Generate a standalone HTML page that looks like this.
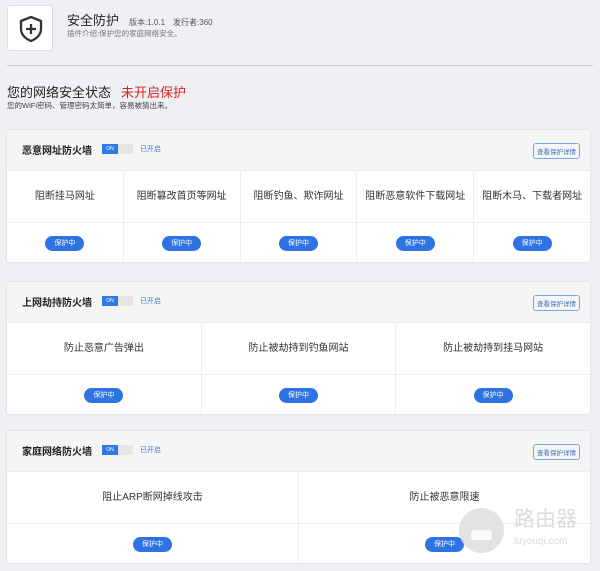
<!DOCTYPE html>
<html><head><meta charset="utf-8"><style>
*{margin:0;padding:0;box-sizing:border-box}
body{width:600px;height:571px;background:#eef0f3;font-family:"Liberation Sans","Noto Sans CJK SC",sans-serif;color:#333;position:relative;overflow:hidden}
.logo{position:absolute;left:7px;top:5px;width:46px;height:46px;background:#fff;border:1px solid #ddd;border-radius:3px}
.t1{position:absolute;left:67px;top:10px;font-size:13px;color:#222}
.t1 small{font-size:8px;color:#555;margin-left:10px}
.t2{position:absolute;left:67px;top:28px;font-size:7.5px;color:#777}
.hr{position:absolute;left:7px;right:7px;top:65px;border-top:1px solid #ccc}
.s1{position:absolute;left:7px;top:82px;font-size:13px;color:#222}
.s1 b{font-weight:normal;color:#e02020;margin-left:10px}
.s2{position:absolute;left:7px;top:100px;font-size:7.5px;color:#444}
.card{position:absolute;left:7px;width:583px;background:#fff;border-radius:3px;box-shadow:0 0 2px rgba(0,0,0,.15)}
.hd{height:41px;background:#f5f5f6;position:relative;border-bottom:1px solid #eee}
.hd .n{position:absolute;left:15px;top:12px;font-size:10px;font-weight:bold;color:#222}
.sw{position:absolute;left:95px;top:14px;width:31px;height:10px;background:#e6e6e6}
.sw i{display:block;width:16px;height:10px;background:#2f7ae5;color:#fff;font-size:5px;font-style:normal;text-align:center;line-height:10px}
.on{position:absolute;left:133px;top:14px;font-size:7px;color:#3b7be0}
.det{position:absolute;right:10px;top:13px;border:1px solid #7aa6e8;border-radius:3px;font-size:6.5px;color:#3b6fc0;padding:2px 3px}
.row{display:flex}
.row>div{flex:1;border-right:1px solid #eee;text-align:center}
.row>div:last-child{border-right:none}
.tx{height:52px;line-height:52px;font-size:10px;border-bottom:1px solid #eee}
.bd{height:39px;padding-top:9px}
.bd span{display:inline-block;background:#2f73e3;color:#fff;font-size:7px;border-radius:8px;width:39px;height:15px;line-height:15px}
.wm{position:absolute;left:459px;top:508px;width:45px;height:45px;border-radius:50%;background:rgba(215,215,218,.7)}
.wm i{position:absolute;left:12px;top:22px;width:21px;height:10px;border-radius:3px;background:rgba(255,255,255,.8)}
.wt{position:absolute;left:514px;top:503px;font-size:21px;color:rgba(215,215,218,.9)}
.wu{position:absolute;left:514px;top:536px;font-size:10px;color:rgba(215,215,218,.9)}
</style></head><body>
<div class="logo"><svg width="46" height="46" viewBox="0 0 46 46"><path d="M23 11 L33 15 V23 C33 29 28 33 23 35 C18 33 13 29 13 23 V15 Z" fill="none" stroke="#333" stroke-width="2.3" stroke-linejoin="round"/><path d="M23 18v10M18 23h10" stroke="#333" stroke-width="2.3"/></svg></div>
<div class="t1">安全防护<small>版本:1.0.1</small><small style="margin-left:8px">发行者:360</small></div>
<div class="t2">插件介绍:保护您的家庭网络安全。</div>
<div class="hr"></div>
<div class="s1">您的网络安全状态<b>未开启保护</b></div>
<div class="s2">您的WiFi密码、管理密码太简单，容易被猜出来。</div>

<div class="card" style="top:130px">
<div class="hd"><span class="n">恶意网址防火墙</span><div class="sw"><i>ON</i></div><span class="on">已开启</span><span class="det">查看保护详情</span></div>
<div class="row"><div><div class="tx">阻断挂马网址</div><div class="bd"><span>保护中</span></div></div><div><div class="tx">阻断篡改首页等网址</div><div class="bd"><span>保护中</span></div></div><div><div class="tx">阻断钓鱼、欺诈网址</div><div class="bd"><span>保护中</span></div></div><div><div class="tx">阻断恶意软件下载网址</div><div class="bd"><span>保护中</span></div></div><div><div class="tx">阻断木马、下载者网址</div><div class="bd"><span>保护中</span></div></div></div>
</div>

<div class="card" style="top:282px">
<div class="hd"><span class="n">上网劫持防火墙</span><div class="sw"><i>ON</i></div><span class="on">已开启</span><span class="det">查看保护详情</span></div>
<div class="row"><div><div class="tx">防止恶意广告弹出</div><div class="bd"><span>保护中</span></div></div><div><div class="tx">防止被劫持到钓鱼网站</div><div class="bd"><span>保护中</span></div></div><div><div class="tx">防止被劫持到挂马网站</div><div class="bd"><span>保护中</span></div></div></div>
</div>

<div class="card" style="top:431px">
<div class="hd"><span class="n">家庭网络防火墙</span><div class="sw"><i>ON</i></div><span class="on">已开启</span><span class="det">查看保护详情</span></div>
<div class="row"><div><div class="tx">阻止ARP断网掉线攻击</div><div class="bd"><span>保护中</span></div></div><div><div class="tx">防止被恶意限速</div><div class="bd"><span>保护中</span></div></div></div>
</div>
<div class="wm"><i></i></div>
<div class="wt">路由器</div>
<div class="wu">luyouqi.com</div>
</body></html>
